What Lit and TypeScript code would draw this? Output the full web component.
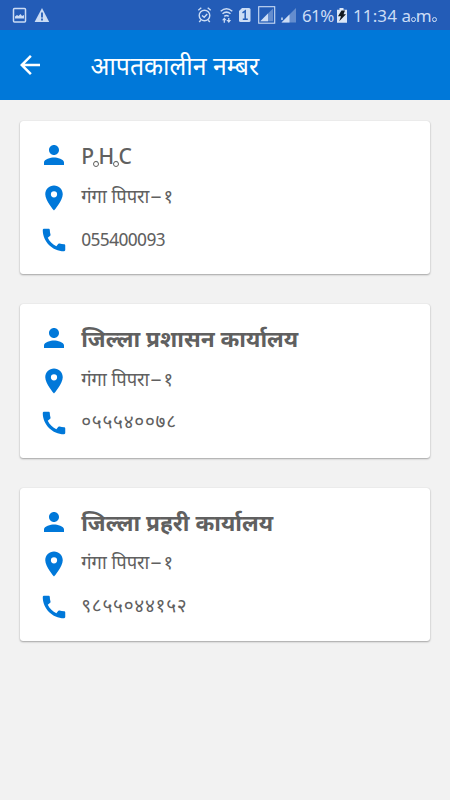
import { LitElement, html, css, svg } from "lit";
import { customElement, property } from "lit/decorators.js";

interface Contact {
  name: string;
  place: string;
  ward: string;
  phone: string;
  kind: string;
}

const contacts: Contact[] = [
  { name: "P.H.C", place: "गंगा पिपरा", ward: "१", phone: "055400093", kind: "latin" },
  { name: "जिल्ला प्रशासन कार्यालय", place: "गंगा पिपरा", ward: "१", phone: "०५५५४००७८", kind: "deva" },
  { name: "जिल्ला प्रहरी कार्यालय", place: "गंगा पिपरा", ward: "१", phone: "९८५५०४४१५२", kind: "deva" },
];

const person = svg`<path d="M12 12c2.21 0 4-1.79 4-4s-1.79-4-4-4-4 1.79-4 4 1.79 4 4 4zm0 2c-2.67 0-8 1.34-8 4v2h16v-2c0-2.66-5.33-4-8-4z"/>`;
const pin = svg`<path d="M12 2C8.13 2 5 5.13 5 9c0 5.25 7 13 7 13s7-7.75 7-13c0-3.87-3.13-7-7-7zm0 9.5a2.5 2.5 0 0 1 0-5 2.5 2.5 0 0 1 0 5z"/>`;
const call = svg`<path d="M20.01 15.38c-1.23 0-2.42-.2-3.53-.56a.977.977 0 0 0-1.01.24l-1.57 1.97c-2.83-1.35-5.48-3.9-6.89-6.83l1.95-1.66c.27-.28.35-.67.24-1.02-.37-1.11-.56-2.3-.56-3.53 0-.54-.45-.99-.99-.99H4.19C3.65 3 3 3.24 3 3.99 3 13.28 10.73 21 20.01 21c.71 0 .99-.63.99-1.18v-3.45c0-.54-.45-.99-.99-.99z"/>`;

// Full stops are drawn as small rings.
const ringDots = css`
  .dot {
    position: relative;
  }
  .dot::after {
    content: "";
    position: absolute;
    box-sizing: border-box;
    left: 50%;
    bottom: 0.27em;
    width: 0.3em;
    height: 0.3em;
    margin-left: -0.15em;
    border: 1.5px solid var(--ring);
    border-radius: 50%;
    background: var(--hole);
  }
`;
const withDots = (text: string) =>
  text
    .split(/(\.)/)
    .filter((part) => part.length > 0)
    .map((part) => (part === "." ? html`<span class="dot">.</span>` : part));

@customElement("status-bar")
export class StatusBar extends LitElement {
  static styles = [
    ringDots,
    css`
      :host {
        display: block;
        height: 30px;
        background: #235cb7;
        color: #cbdcf5;
        --ring: #cbdcf5;
        --hole: #235cb7;
      }
      .bar {
        display: flex;
        align-items: center;
        height: 30px;
      }
      svg {
        display: block;
        flex: none;
      }
      .text {
        font: 17px/30px "Noto Sans", sans-serif;
        white-space: nowrap;
        padding-top: 1px;
      }
      .percent {
        width: 34px;
        letter-spacing: -0.6px;
      }
      .time {
        letter-spacing: 0.1px;
      }
    `,
  ];

  render() {
    return html`<div class="bar">
      <svg width="302" height="30" viewBox="0 0 302 30" fill="none" stroke="#cbdcf5">
        <rect x="13.5" y="8.5" width="12" height="13.5" rx="1" stroke-width="1.5" />
        <path d="M15 18.5v-2l2-1.5 1.5 1 2-2 1.5 2 2-1v3.5z" fill="#cbdcf5" stroke="none" />
        <path d="M42 8l7.2 14H34.6z" fill="#cbdcf5" stroke="none" />
        <path d="M42 12.5v5M42 18.6v1.8" stroke="#235cb7" stroke-width="1.8" />
        <circle cx="204.5" cy="15.5" r="5.3" stroke-width="1.4" />
        <path d="M202 15.5l2.2 1.8 3-3.2M198.3 10.3l3-2.5M210.7 10.3l-3-2.5M200.8 20.2l-1.6 1.8M208.2 20.2l1.6 1.8" stroke-width="1.4" />
        <path d="M220.7 11.2q5.8-5 11.6 0M222.5 13.8q4-3.4 8 0M224.3 16.3q2.2-1.8 4.4 0" stroke-width="1.5" />
        <path d="M224.3 22.8v-3.5M228.8 18v3.5" stroke-width="1.3" />
        <path d="M222 20.3l2.3-2.8 2.3 2.8zM226.5 20l2.3 3 2.3-3z" fill="#cbdcf5" stroke="none" />
        <path d="M242 8h7q1.5 0 1.5 1.5v11q0 1.5-1.5 1.5h-8.5q-1.5 0-1.5-1.5V11z" fill="#cbdcf5" stroke="none" />
        <path d="M242.5 12.8l2.7-1.8v8.5M242.8 19.3h5" stroke="#235cb7" stroke-width="1.5" />
        <rect x="258.7" y="6.7" width="16" height="16.5" stroke-width="1.1" />
        <path d="M273 8.5v12.7h-12.7z" fill="#648dce" stroke="none" />
        <path d="M268 13.5v7.7h-7.7z" fill="#cbdcf5" stroke="none" />
        <path d="M296 8v14.5h-14.5z" fill="#648dce" stroke="none" />
        <path d="M289.5 14.5v8h-8z" fill="#cbdcf5" stroke="none" />
        <path d="M282 17.5v2.5" stroke-width="1.5" />
      </svg>
      <span class="text percent">61%</span>
      <svg width="17" height="30" viewBox="336 0 17 30">
        <path d="M339.5 8h4v1.7h3.5V22.7h-10V9.7h2.5z" fill="#dce7f7" />
        <path d="M341.5 10.5h3.5l-1.5 3.7h2.5l-6.8 7 1.8-5h-3z" fill="#111820" />
      </svg>
      <span class="text time">${withDots("11:34 a.m.")}</span>
    </div>`;
  }
}

@customElement("app-header")
export class AppHeader extends LitElement {
  static styles = css`
    :host {
      display: block;
      background: #0078d9;
      color: #fff;
    }
    .header {
      display: flex;
      align-items: center;
      height: 70px;
      padding-left: 15px;
    }
    svg {
      display: block;
      width: 30px;
      height: 30px;
      fill: #fff;
    }
    .title {
      margin-left: 45.5px;
      padding-top: 7px;
      font: 24.8px/30px "Noto Sans Devanagari", "Noto Sans", sans-serif;
      white-space: nowrap;
    }
  `;

  render() {
    return html`<div class="header">
      <svg viewBox="0 0 24 24"><path d="M20 11H7.83l5.59-5.59L12 4l-8 8 8 8 1.41-1.41L7.83 13H20z" /></svg>
      <span class="title">आपतकालीन नम्बर</span>
    </div>`;
  }
}

@customElement("contact-card")
export class ContactCard extends LitElement {
  @property({ attribute: false }) contact!: Contact;

  static styles = [
    ringDots,
    css`
      :host {
        display: block;
        --ring: #606060;
        --hole: #fff;
      }
      .card {
        box-sizing: border-box;
        height: 153.3px;
        padding: 19px 0 0 18.7px;
        border-radius: 3px;
        background: #fff;
        color: #606060;
        box-shadow: 0 1px 2px rgba(0, 0, 0, 0.32), 0 0 1px rgba(0, 0, 0, 0.15);
      }
      .row {
        display: flex;
        align-items: center;
        height: 30px;
        margin-bottom: 12.6px;
      }
      svg {
        display: block;
        flex: none;
        width: 30px;
        height: 30px;
        margin-right: 12.5px;
        fill: #0078d9;
      }
      .name,
      .place,
      .phone {
        padding-top: 2px;
        font: 18.4px/30px "Noto Sans Devanagari", "Noto Sans", sans-serif;
        white-space: nowrap;
      }
      .name {
        padding-top: 8px;
        font-size: 22.7px;
        font-weight: 700;
      }
      .name.latin {
        font-size: 21px;
        font-weight: 500;
        letter-spacing: -0.7px;
      }
      .dash {
        display: inline-block;
        width: 14px;
        text-align: center;
        transform: scaleX(1.2);
      }
      .phone.latin {
        font-size: 18px;
        letter-spacing: -0.6px;
        padding-top: 3px;
      }
      .phone.deva {
        font-size: 19px;
        letter-spacing: 0.75px;
      }
    `,
  ];

  render() {
    const { name, place, ward, phone, kind } = this.contact;
    return html`<div class="card">
      <div class="row"><svg viewBox="0 0 24 24">${person}</svg><span class="name ${kind}">${withDots(name)}</span></div>
      <div class="row"><svg viewBox="0 0 24 24">${pin}</svg><span class="place">${place}<span class="dash">–</span>${ward}</span></div>
      <div class="row"><svg viewBox="0 0 24 24">${call}</svg><span class="phone ${kind}">${phone}</span></div>
    </div>`;
  }
}

@customElement("app-root")
export class AppRoot extends LitElement {
  static styles = css`
    :host {
      display: block;
      min-height: 800px;
      background: #f2f2f2;
    }
    .list {
      display: flex;
      flex-direction: column;
      gap: 30px;
      padding: 21px 20px 0;
    }
  `;

  render() {
    return html`<status-bar></status-bar>
      <app-header></app-header>
      <main class="list">${contacts.map((c) => html`<contact-card .contact=${c}></contact-card>`)}</main>`;
  }
}
